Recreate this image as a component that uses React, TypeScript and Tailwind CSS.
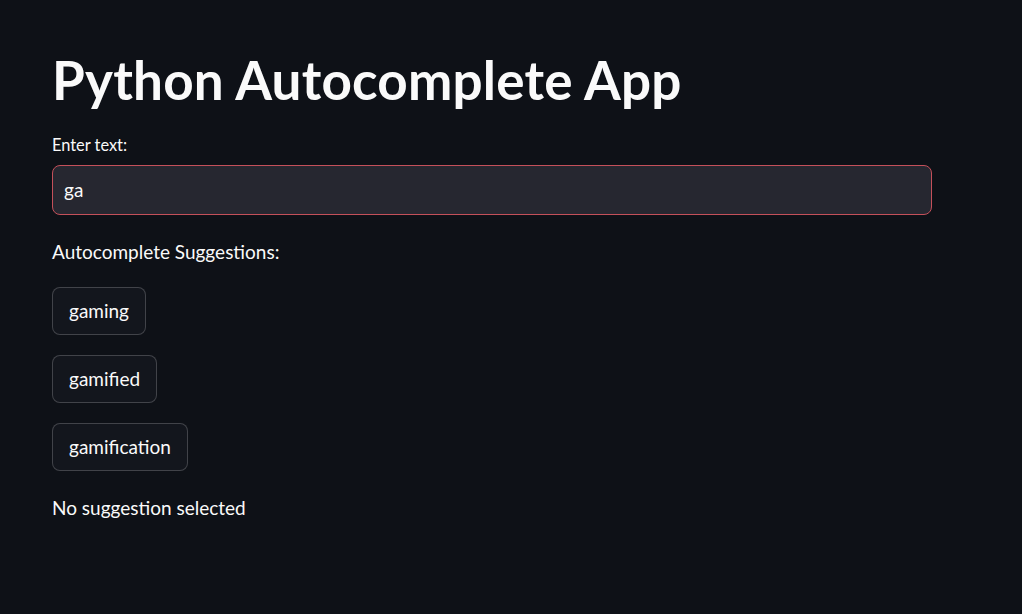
const suggestions = ['gaming', 'gamified', 'gamification']

export default function App() {
  return (
    <div
      className="min-h-screen w-full bg-[#0e1117] text-[#fafafa]"
      style={{ fontFamily: 'Lato, "Noto Sans", sans-serif' }}
    >
      <div className="w-[880px] pl-[52px] pt-[48px] box-content">
        {/* Title */}
        <h1 className="text-[53px] leading-[64px] font-bold tracking-[0.2px]">
          Python Autocomplete App
        </h1>

        {/* Text input */}
        <label className="block mt-[23px] text-[16.4px] leading-[20px]">Enter text:</label>
        <div className="mt-[10px] h-[50px] rounded-[8px] border border-[#c4505a] bg-[#262730] flex items-center px-[11px]">
          <span className="text-[19px]">ga</span>
        </div>

        <div className="mt-[25px] text-[19px] leading-[24px]">Autocomplete Suggestions:</div>

        {/* Suggestion buttons */}
        <div className="mt-[23px] flex flex-col items-start gap-[20px]">
          {suggestions.map((s) => (
            <button
              key={s}
              className="h-[48px] px-[16px] rounded-[8px] border border-[#fafafa]/20 bg-[#13161d] text-[19px] text-[#fafafa]"
            >
              {s}
            </button>
          ))}
        </div>

        <div className="mt-[25px] text-[19px] leading-[24px]">No suggestion selected</div>
      </div>
    </div>
  )
}
